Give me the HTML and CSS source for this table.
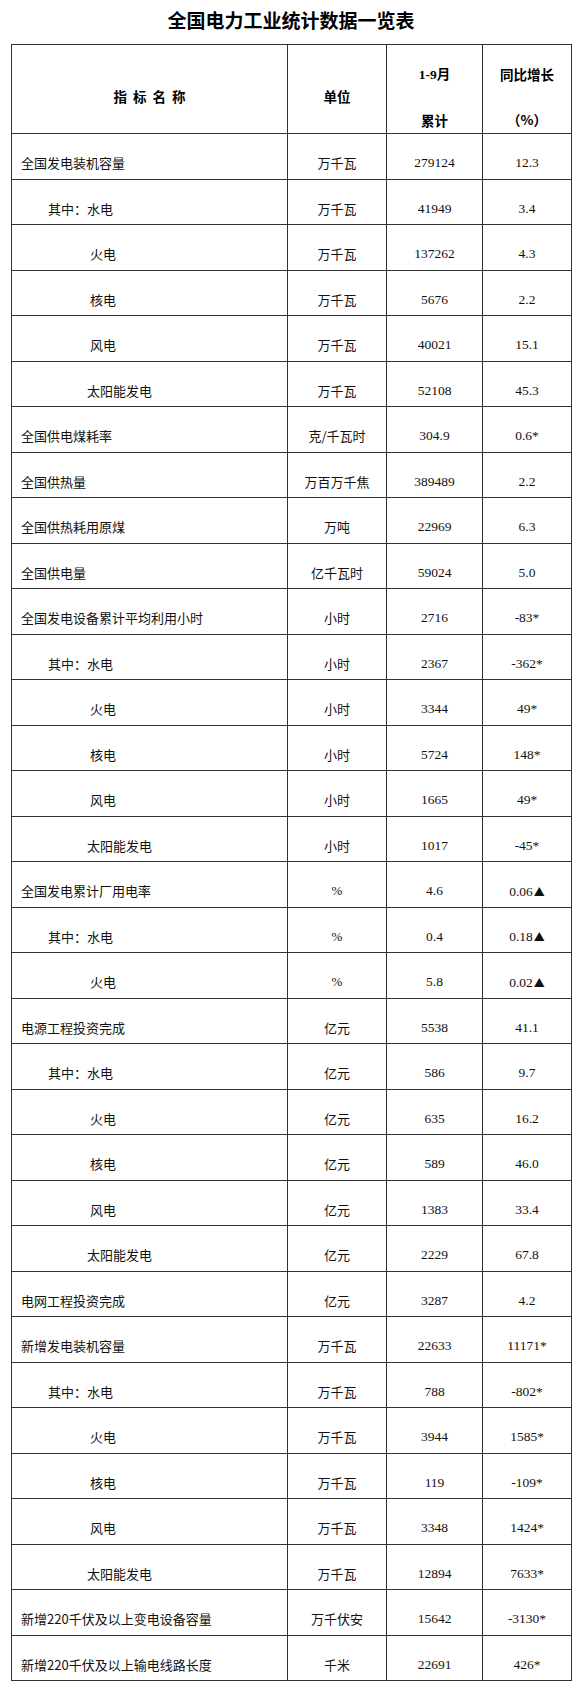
FILE: index.html
```html
<!DOCTYPE html>
<html lang="zh-CN">
<head>
<meta charset="utf-8">
<title>全国电力工业统计数据一览表</title>
<link rel="stylesheet" href="styles.css">
</head>
<body>
<div class="page">
  <h1 class="title">全国电力工业统计数据一览表</h1>
  <table class="stats">
    <colgroup>
      <col class="c-name"><col class="c-unit"><col class="c-val"><col class="c-chg">
    </colgroup>
    <thead>
      <tr class="head">
        <th><span class="spaced">指标名称</span></th>
        <th>单位</th>
        <th><span class="hl"><span class="num">1-9</span>月</span><span class="hl hl2">累计</span></th>
        <th><span class="hl">同比增长</span><span class="hl hl2">（%）</span></th>
      </tr>
    </thead>
    <tbody>
      <tr><td class="name l0">全国发电装机容量</td><td class="unit">万千瓦</td><td class="num">279124</td><td class="num">12.3</td></tr>
      <tr><td class="name l1">其中：水电</td><td class="unit">万千瓦</td><td class="num">41949</td><td class="num">3.4</td></tr>
      <tr><td class="name l2">火电</td><td class="unit">万千瓦</td><td class="num">137262</td><td class="num">4.3</td></tr>
      <tr><td class="name l2">核电</td><td class="unit">万千瓦</td><td class="num">5676</td><td class="num">2.2</td></tr>
      <tr><td class="name l2">风电</td><td class="unit">万千瓦</td><td class="num">40021</td><td class="num">15.1</td></tr>
      <tr><td class="name l2s">太阳能发电</td><td class="unit">万千瓦</td><td class="num">52108</td><td class="num">45.3</td></tr>
      <tr><td class="name l0">全国供电煤耗率</td><td class="unit">克/千瓦时</td><td class="num">304.9</td><td class="num">0.6*</td></tr>
      <tr><td class="name l0">全国供热量</td><td class="unit">万百万千焦</td><td class="num">389489</td><td class="num">2.2</td></tr>
      <tr><td class="name l0">全国供热耗用原煤</td><td class="unit">万吨</td><td class="num">22969</td><td class="num">6.3</td></tr>
      <tr><td class="name l0">全国供电量</td><td class="unit">亿千瓦时</td><td class="num">59024</td><td class="num">5.0</td></tr>
      <tr><td class="name l0">全国发电设备累计平均利用小时</td><td class="unit">小时</td><td class="num">2716</td><td class="num">-83*</td></tr>
      <tr><td class="name l1">其中：水电</td><td class="unit">小时</td><td class="num">2367</td><td class="num">-362*</td></tr>
      <tr><td class="name l2">火电</td><td class="unit">小时</td><td class="num">3344</td><td class="num">49*</td></tr>
      <tr><td class="name l2">核电</td><td class="unit">小时</td><td class="num">5724</td><td class="num">148*</td></tr>
      <tr><td class="name l2">风电</td><td class="unit">小时</td><td class="num">1665</td><td class="num">49*</td></tr>
      <tr><td class="name l2s">太阳能发电</td><td class="unit">小时</td><td class="num">1017</td><td class="num">-45*</td></tr>
      <tr><td class="name l0">全国发电累计厂用电率</td><td class="unit pct">%</td><td class="num">4.6</td><td class="num">0.06<span class="tri">▲</span></td></tr>
      <tr><td class="name l1">其中：水电</td><td class="unit pct">%</td><td class="num">0.4</td><td class="num">0.18<span class="tri">▲</span></td></tr>
      <tr><td class="name l2">火电</td><td class="unit pct">%</td><td class="num">5.8</td><td class="num">0.02<span class="tri">▲</span></td></tr>
      <tr><td class="name l0">电源工程投资完成</td><td class="unit">亿元</td><td class="num">5538</td><td class="num">41.1</td></tr>
      <tr><td class="name l1">其中：水电</td><td class="unit">亿元</td><td class="num">586</td><td class="num">9.7</td></tr>
      <tr><td class="name l2">火电</td><td class="unit">亿元</td><td class="num">635</td><td class="num">16.2</td></tr>
      <tr><td class="name l2">核电</td><td class="unit">亿元</td><td class="num">589</td><td class="num">46.0</td></tr>
      <tr><td class="name l2">风电</td><td class="unit">亿元</td><td class="num">1383</td><td class="num">33.4</td></tr>
      <tr><td class="name l2s">太阳能发电</td><td class="unit">亿元</td><td class="num">2229</td><td class="num">67.8</td></tr>
      <tr><td class="name l0">电网工程投资完成</td><td class="unit">亿元</td><td class="num">3287</td><td class="num">4.2</td></tr>
      <tr><td class="name l0">新增发电装机容量</td><td class="unit">万千瓦</td><td class="num">22633</td><td class="num">11171*</td></tr>
      <tr><td class="name l1">其中：水电</td><td class="unit">万千瓦</td><td class="num">788</td><td class="num">-802*</td></tr>
      <tr><td class="name l2">火电</td><td class="unit">万千瓦</td><td class="num">3944</td><td class="num">1585*</td></tr>
      <tr><td class="name l2">核电</td><td class="unit">万千瓦</td><td class="num">119</td><td class="num">-109*</td></tr>
      <tr><td class="name l2">风电</td><td class="unit">万千瓦</td><td class="num">3348</td><td class="num">1424*</td></tr>
      <tr><td class="name l2s">太阳能发电</td><td class="unit">万千瓦</td><td class="num">12894</td><td class="num">7633*</td></tr>
      <tr><td class="name l0">新增220千伏及以上变电设备容量</td><td class="unit">万千伏安</td><td class="num">15642</td><td class="num">-3130*</td></tr>
      <tr><td class="name l0">新增220千伏及以上输电线路长度</td><td class="unit">千米</td><td class="num">22691</td><td class="num">426*</td></tr>
    </tbody>
  </table>
</div>
</body>
</html>
```

FILE: styles.css
```css
html, body {
  margin: 0;
  padding: 0;
  background: #fff;
}

body {
  color: #111;
  font-family: "Noto Sans CJK SC", "Noto Sans", sans-serif;
}

.page {
  padding: 0 10px 13px 11px;
}

.title {
  margin: 0 0 4px 0;
  height: 40px;
  line-height: 40px;
  font-size: 19px;
  font-weight: bold;
  text-align: center;
  color: #000;
}

.stats {
  width: 560px;
  border-collapse: collapse;
  table-layout: fixed;
  border: 1px solid #333;
}

.c-name { width: 276px; }
.c-unit { width: 99px; }
.c-val  { width: 96px; }
.c-chg  { width: 89px; }

.stats th,
.stats td {
  border: 1px solid #333;
  padding: 14px 0 0 0;
  vertical-align: middle;
  text-align: center;
  line-height: 16px;
  font-size: 13px;
}

.head {
  height: 89px;
}

.stats th {
  font-weight: bold;
  font-size: 13.5px;
  color: #000;
}

.hl {
  display: block;
  line-height: 16px;
}

.hl2 {
  margin-top: 29px;
}

.spaced {
  letter-spacing: 6px;
  margin-right: -6px;
}

.stats tbody tr {
  height: 45.5px;
}

.stats td.name {
  text-align: left;
  white-space: nowrap;
}

.l0  { padding-left: 9px !important; }
.l1  { padding-left: 36px !important; }
.l2  { padding-left: 78px !important; }
.l2s { padding-left: 75px !important; }

.num {
  font-family: "Liberation Serif", "Noto Sans CJK SC", serif;
  font-size: 13.5px;
}

.stats td.num {
  font-size: 13.5px;
}

.pct {
  font-family: "Liberation Serif", serif;
  font-size: 12px;
}

.tri {
  font-family: "Noto Sans CJK SC", sans-serif;
  font-size: 11px;
  margin-left: 1px;
}
```
